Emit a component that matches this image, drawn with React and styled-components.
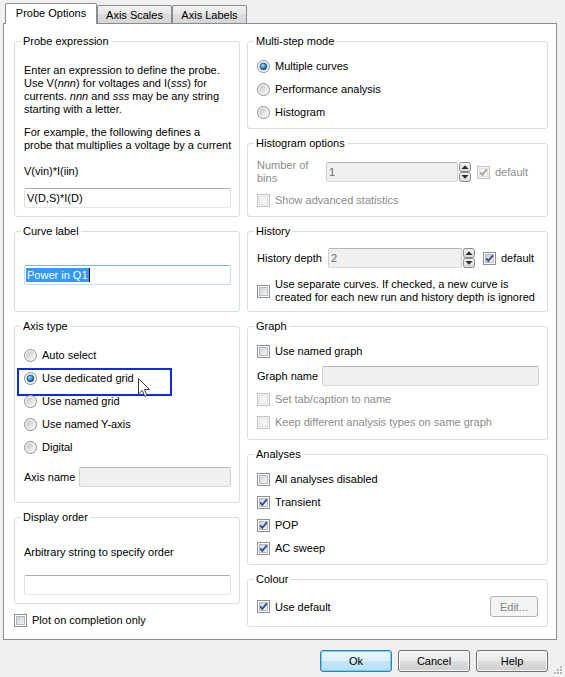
import React from "react";
import styled, { createGlobalStyle } from "styled-components";

const GlobalStyle = createGlobalStyle`
  html, body {
    margin: 0;
    padding: 0;
    background: #f0f0f0;
  }
  body {
    font-family: Tahoma, "Liberation Sans", Arial, sans-serif;
    font-size: 11px;
    color: #000;
  }
  * {
    box-sizing: border-box;
  }
`;

const Dialog = styled.div`
  position: relative;
  width: 565px;
  height: 677px;
  padding: 3px 8px 0 3px;
  display: flex;
  flex-direction: column;
  background: #f0f0f0;
  overflow: hidden;
`;

const TabRow = styled.div`
  display: flex;
  align-items: flex-end;
  height: 21px;
  margin: 0 0 -1px 2px;
  position: relative;
  z-index: 1;
`;

const Tab = styled.div`
  width: ${(p) => p.$w}px;
  height: ${(p) => (p.$active ? 21 : 18)}px;
  margin-bottom: ${(p) => (p.$active ? 0 : 1)}px;
  display: flex;
  align-items: center;
  justify-content: center;
  padding-bottom: ${(p) => (p.$active ? 2 : 0)}px;
  border: 1px solid #898c95;
  border-bottom: none;
  border-radius: 2px 2px 0 0;
  background: ${(p) =>
    p.$active ? "#fff" : "linear-gradient(#f2f2f2, #e6e6e6 50%, #dcdcdc 50%, #d6d6d6)"};
`;

const Panel = styled.div`
  display: flex;
  gap: 7px;
  height: 617px;
  padding: 11px 8px 0 10px;
  background: #fff;
  border: 1px solid #898c95;
`;

const Column = styled.div`
  display: flex;
  flex-direction: column;
  gap: 8px;
  width: ${(p) => p.$w}px;
  flex: none;
`;

const Group = styled.fieldset`
  margin: 0;
  padding: 0;
  min-width: 0;
  height: ${(p) => p.$h}px;
  border: 1px solid #d5dfe5;
  border-radius: 3px;
`;

const Legend = styled.legend`
  margin-left: 6px;
  padding: 0 2px;
  line-height: 13px;
`;

const GroupBody = styled.div`
  display: flex;
  flex-direction: column;
  padding: 0 ${(p) => p.$pr ?? 8}px 0 9px;
`;

const Note = styled.p`
  margin: ${(p) => p.$mt || 0}px 0 0;
  line-height: 13px;
  white-space: nowrap;
`;

const Em = styled.i`
  font-style: italic;
`;

const TextBox = styled.div`
  height: 20px;
  margin-top: ${(p) => p.$mt || 0}px;
  width: ${(p) => (p.$w ? `${p.$w}px` : "auto")};
  flex: ${(p) => (p.$grow ? "1 1 auto" : "none")};
  display: flex;
  align-items: center;
  padding: 0 2px;
  border: 1px solid;
  border-radius: 2px;
  white-space: nowrap;
  border-color: ${(p) =>
    p.$focused
      ? "#7eb4ea #c5dcf2 #c5dcf2 #c5dcf2"
      : p.$disabled
      ? "#b5b5b5 #cfcfcf #d9d9d9 #cfcfcf"
      : "#abadb3 #dbdfe6 #e3e9ef #dbdfe6"};
  background: ${(p) => (p.$disabled ? "#f0f0f0" : "#fff")};
  color: ${(p) => (p.$disabled ? "#6d6d6d" : "#000")};
`;

const Selection = styled.span`
  margin-left: -1px;
  padding: 0 1px;
  line-height: 14px;
  background: #3399ff;
  color: #fff;
`;

const Caret = styled.span`
  width: 1px;
  height: 14px;
  background: #000;
`;

const OptionList = styled.div`
  display: flex;
  flex-direction: column;
  margin-top: ${(p) => p.$mt || 0}px;
`;

const Option = styled.div`
  position: relative;
  display: flex;
  align-items: center;
  gap: 5px;
  height: ${(p) => p.$h || 23}px;
  margin-top: ${(p) => p.$mt || 0}px;
  line-height: 13px;
  white-space: nowrap;
  color: ${(p) => (p.$disabled ? "#8b8b8b" : "#000")};
`;

const FieldRow = styled.div`
  display: flex;
  align-items: center;
  height: ${(p) => p.$h || 20}px;
  margin-top: ${(p) => p.$mt || 0}px;
  white-space: nowrap;
`;

const FieldLabel = styled.span`
  width: ${(p) => p.$w}px;
  flex: none;
  line-height: 13px;
  color: ${(p) => (p.$disabled ? "#8b8b8b" : "#000")};
`;

const Aside = styled.span`
  display: flex;
  align-items: center;
  gap: 5px;
  margin-left: ${(p) => p.$ml || 0}px;
  color: ${(p) => (p.$disabled ? "#8b8b8b" : "#000")};
`;

const Spacer = styled.div`
  flex: 1;
`;

const Glyph = styled.svg`
  flex: none;
  display: block;
  margin-left: ${(p) => p.$ml || 0}px;
`;

const FocusMark = styled.div`
  position: absolute;
  left: -7px;
  top: 1px;
  width: 155px;
  height: 28px;
  border: 2px solid #0c2ee0;
  pointer-events: none;
`;

const CursorMark = styled.svg`
  position: absolute;
  left: 114px;
  top: 11px;
`;

const ButtonRow = styled.div`
  display: flex;
  justify-content: flex-end;
  gap: 6px;
  margin-top: 10px;
  padding-right: 9px;
`;

const PushButton = styled.button`
  width: ${(p) => p.$w}px;
  height: ${(p) => p.$h}px;
  padding: 0;
  font: inherit;
  color: #000;
  border-radius: 3px;
  border: 1px solid ${(p) => (p.$default ? "#3c7fb1" : "#707070")};
  background: ${(p) =>
    p.$default
      ? "linear-gradient(#eaf6fd, #dcf1fb 50%, #c6e7f8 50%, #b8e0f5)"
      : "linear-gradient(#f2f2f2, #ebebeb 50%, #dddddd 50%, #cfcfcf)"};
  box-shadow: inset 0 0 0 1px
    ${(p) => (p.$default ? "rgba(100, 205, 250, 0.95)" : "rgba(255, 255, 255, 0.85)")};

  &:disabled {
    border-color: #adb2b5;
    background: #f4f4f4;
    color: #838383;
    box-shadow: none;
  }
`;

const Grip = styled.svg`
  position: absolute;
  right: 2px;
  bottom: 2px;
`;

const Radio = ({ checked }) => (
  <Glyph width="13" height="13" viewBox="0 0 13 13">
    <defs>
      <linearGradient id="radioIn" x1="0" y1="0" x2="1" y2="1">
        <stop offset="0" stopColor="#c3c3c3" />
        <stop offset="1" stopColor="#fafafa" />
      </linearGradient>
      <radialGradient id="radioDot" cx="0.4" cy="0.35" r="0.7">
        <stop offset="0" stopColor="#b4e6ff" />
        <stop offset="0.45" stopColor="#3a93d6" />
        <stop offset="1" stopColor="#154a7c" />
      </radialGradient>
    </defs>
    <circle cx="6.5" cy="6.5" r="6" fill="#f4f4f4" stroke="#8e8f8f" />
    <circle cx="6.5" cy="6.5" r="4.3" fill="url(#radioIn)" />
    {checked && (
      <circle cx="6.5" cy="6.5" r="3.4" fill="url(#radioDot)" stroke="#1c4d7c" strokeWidth="0.6" />
    )}
  </Glyph>
);

const Check = ({ checked, disabled, ml }) => (
  <Glyph width="13" height="13" viewBox="0 0 13 13" $ml={ml}>
    <defs>
      <linearGradient id="checkIn" x1="0" y1="0" x2="1" y2="1">
        <stop offset="0" stopColor="#cbcfd4" />
        <stop offset="1" stopColor="#f7f7f7" />
      </linearGradient>
    </defs>
    <rect x="0.5" y="0.5" width="12" height="12" fill={disabled ? "#f4f4f4" : "#fff"} stroke={disabled ? "#c3c3c3" : "#8e8f8f"} />
    <rect
      x="2.5"
      y="2.5"
      width="8"
      height="8"
      fill={disabled ? "#f4f4f4" : "url(#checkIn)"}
      stroke={disabled ? "#e2e2e2" : "#b4b9c0"}
    />
    {checked && (
      <path
        d="M3.2 6.4 L5.3 8.9 L9.9 3.4"
        fill="none"
        stroke={disabled ? "#a3a3a3" : "#2c4c94"}
        strokeWidth="1.8"
      />
    )}
  </Glyph>
);

const Spin = ({ ml }) => (
  <Glyph width="12" height="20" viewBox="0 0 12 20" $ml={ml}>
    <defs>
      <linearGradient id="spinBg" x1="0" y1="0" x2="0" y2="1">
        <stop offset="0" stopColor="#f4f4f4" />
        <stop offset="1" stopColor="#d8d8d8" />
      </linearGradient>
    </defs>
    <rect x="0.5" y="0.5" width="11" height="9" rx="2" fill="url(#spinBg)" stroke="#8a8a8a" />
    <rect x="0.5" y="10.5" width="11" height="9" rx="2" fill="url(#spinBg)" stroke="#8a8a8a" />
    <path d="M2.5 7 L6 3.3 L9.5 7 Z" fill="#2a2a2a" />
    <path d="M2.5 13 L9.5 13 L6 16.7 Z" fill="#2a2a2a" />
  </Glyph>
);

const App = () => {
  return (
    <Dialog>
      <GlobalStyle />
      <TabRow>
        <Tab $active $w={92}>Probe Options</Tab>
        <Tab $w={75}>Axis Scales</Tab>
        <Tab $w={75}>Axis Labels</Tab>
      </TabRow>

      <Panel>
        <Column $w={226}>
          <Group $h={182}>
            <Legend>Probe expression</Legend>
            <GroupBody>
              <Note $mt={16}>
                Enter an expression to define the probe.
                <br />
                Use V(<Em>nnn</Em>) for voltages and I(<Em>sss</Em>) for
                <br />
                currents. <Em>nnn</Em> and <Em>sss</Em> may be any string
                <br />
                starting with a letter.
              </Note>
              <Note $mt={10}>
                For example, the following defines a
                <br />
                probe that multiplies a voltage by a current
              </Note>
              <Note $mt={13}>V(vin)*I(iin)</Note>
              <TextBox $mt={10}>V(D,S)*I(D)</TextBox>
            </GroupBody>
          </Group>

          <Group $h={87}>
            <Legend>Curve label</Legend>
            <GroupBody>
              <TextBox $mt={27} $focused>
                <Selection>Power in Q1</Selection>
                <Caret />
              </TextBox>
            </GroupBody>
          </Group>

          <Group $h={183}>
            <Legend>Axis type</Legend>
            <GroupBody>
              <OptionList $mt={11}>
                <Option>
                  <Radio />
                  Auto select
                </Option>
                <Option>
                  <Radio checked />
                  Use dedicated grid
                  <FocusMark />
                  <CursorMark width="13" height="20" viewBox="0 0 13 20">
                    <path
                      d="M0.5 0.5 V16 L4.2 12.4 L6.8 18.4 L9 17.4 L6.5 11.6 H11.6 Z"
                      fill="#fff"
                      stroke="#3a3a3a"
                      strokeLinejoin="round"
                    />
                  </CursorMark>
                </Option>
                <Option>
                  <Radio />
                  Use named grid
                </Option>
                <Option>
                  <Radio />
                  Use named Y-axis
                </Option>
                <Option>
                  <Radio />
                  Digital
                </Option>
              </OptionList>
              <FieldRow $mt={8}>
                <FieldLabel $w={55}>Axis name</FieldLabel>
                <TextBox $grow $disabled />
              </FieldRow>
            </GroupBody>
          </Group>

          <Group $h={93}>
            <Legend>Display order</Legend>
            <GroupBody>
              <Note $mt={22}>Arbitrary string to specify order</Note>
              <TextBox $mt={16} />
            </GroupBody>
          </Group>

          <Option $h={16}>
            <Check />
            Plot on completion only
          </Option>
        </Column>

        <Column $w={301}>
          <Group $h={94}>
            <Legend>Multi-step mode</Legend>
            <GroupBody>
              <OptionList $mt={7}>
                <Option>
                  <Radio checked />
                  Multiple curves
                </Option>
                <Option>
                  <Radio />
                  Performance analysis
                </Option>
                <Option>
                  <Radio />
                  Histogram
                </Option>
              </OptionList>
            </GroupBody>
          </Group>

          <Group $h={80}>
            <Legend>Histogram options</Legend>
            <GroupBody>
              <FieldRow $h={26} $mt={9}>
                <FieldLabel $w={69} $disabled>
                  Number of
                  <br />
                  bins
                </FieldLabel>
                <TextBox $w={132} $disabled>
                  1
                </TextBox>
                <Spin ml={1} />
                <Aside $ml={6} $disabled>
                  <Check checked disabled />
                  default
                </Aside>
              </FieldRow>
              <Option $mt={4} $disabled>
                <Check disabled />
                Show advanced statistics
              </Option>
            </GroupBody>
          </Group>

          <Group $h={87}>
            <Legend>History</Legend>
            <GroupBody>
              <FieldRow $mt={10}>
                <FieldLabel $w={71}>History depth</FieldLabel>
                <TextBox $w={134} $disabled>
                  2
                </TextBox>
                <Spin ml={1} />
                <Aside $ml={8}>
                  <Check checked />
                  default
                </Aside>
              </FieldRow>
              <Option $h={26} $mt={10}>
                <Check />
                <span>
                  Use separate curves. If checked, a new curve is
                  <br />
                  created for each new run and history depth is ignored
                </span>
              </Option>
            </GroupBody>
          </Group>

          <Group $h={120}>
            <Legend>Graph</Legend>
            <GroupBody>
              <Option $mt={7}>
                <Check />
                Use named graph
              </Option>
              <FieldRow $mt={3}>
                <FieldLabel $w={65}>Graph name</FieldLabel>
                <TextBox $grow $disabled />
              </FieldRow>
              <Option $mt={2} $disabled>
                <Check disabled />
                Set tab/caption to name
              </Option>
              <Option $disabled>
                <Check disabled />
                Keep different analysis types on same graph
              </Option>
            </GroupBody>
          </Group>

          <Group $h={117}>
            <Legend>Analyses</Legend>
            <GroupBody>
              <OptionList $mt={7}>
                <Option>
                  <Check />
                  All analyses disabled
                </Option>
                <Option>
                  <Check checked />
                  Transient
                </Option>
                <Option>
                  <Check checked />
                  POP
                </Option>
                <Option>
                  <Check checked />
                  AC sweep
                </Option>
              </OptionList>
            </GroupBody>
          </Group>

          <Group $h={54}>
            <Legend>Colour</Legend>
            <GroupBody $pr={9}>
              <FieldRow $h={21} $mt={10}>
                <Aside>
                  <Check checked />
                  Use default
                </Aside>
                <Spacer />
                <PushButton $w={48} $h={21} disabled>
                  Edit...
                </PushButton>
              </FieldRow>
            </GroupBody>
          </Group>
        </Column>
      </Panel>

      <ButtonRow>
        <PushButton $w={72} $h={22} $default>
          Ok
        </PushButton>
        <PushButton $w={72} $h={22}>
          Cancel
        </PushButton>
        <PushButton $w={72} $h={22}>
          Help
        </PushButton>
      </ButtonRow>

      <Grip width="10" height="10" viewBox="0 0 10 10">
        {[
          [7, 1],
          [4, 4],
          [7, 4],
          [1, 7],
          [4, 7],
          [7, 7],
        ].map(([x, y]) => (
          <g key={`${x}-${y}`}>
            <rect x={x + 1} y={y + 1} width="2" height="2" fill="#fff" />
            <rect x={x} y={y} width="2" height="2" fill="#b6b6b6" />
          </g>
        ))}
      </Grip>
    </Dialog>
  );
};

export default App;
